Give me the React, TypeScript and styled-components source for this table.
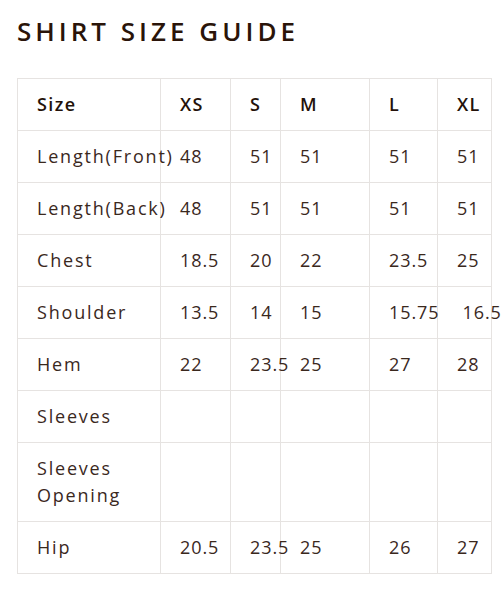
import React from 'react'
import styled, { createGlobalStyle } from 'styled-components'

const Global = createGlobalStyle`
  body {
    margin: 0;
    background: #fff;
    font-family: 'Open Sans', 'Noto Sans', sans-serif;
  }
`

const Page = styled.div`
  padding: 14px 0 0 17px;
`

const Title = styled.h2`
  margin: 0 0 30px;
  font-size: 26px;
  line-height: 34px;
  font-weight: 600;
  letter-spacing: 4px;
  color: #2a1409;
`

const Table = styled.table`
  border-collapse: collapse;
  table-layout: fixed;
  width: 474px;
  color: #3a281d;
`

const Cell = styled.td<{ $head?: boolean; $label?: boolean }>`
  border: 1px solid #e6e3e1;
  padding: 12px 0 12px 19px;
  font-size: 18px;
  line-height: 27px;
  letter-spacing: ${p => (p.$head ? '1.4px' : p.$label ? '1.8px' : '0.9px')};
  white-space: ${p => (p.$head ? 'nowrap' : 'normal')};
  font-weight: ${p => (p.$head ? 600 : 400)};
  color: ${p => (p.$head ? '#24120a' : 'inherit')};
  vertical-align: middle;
  overflow: visible;
`

const widths = [143, 70, 50, 89, 68, 54]
const sizes = ['XS', 'S', 'M', 'L', 'XL']

// the 16.5 value carries a leading space in the source table
const rows: [string, string[]][] = [
  ['Length(Front)', ['48', '51', '51', '51', '51']],
  ['Length(Back)', ['48', '51', '51', '51', '51']],
  ['Chest', ['18.5', '20', '22', '23.5', '25']],
  ['Shoulder', ['13.5', '14', '15', '15.75', '\u00a016.5']],
  ['Hem', ['22', '23.5', '25', '27', '28']],
  ['Sleeves', ['', '', '', '', '']],
  ['Sleeves Opening', ['', '', '', '', '']],
  ['Hip', ['20.5', '23.5', '25', '26', '27']],
]

export default function App() {
  return (
    <Page>
      <Global />
      <Title>SHIRT SIZE GUIDE</Title>
      <Table>
        <colgroup>
          {widths.map((w, i) => <col key={i} style={{ width: w }} />)}
        </colgroup>
        <tbody>
          <tr>
            <Cell $head>Size</Cell>
            {sizes.map(s => <Cell $head key={s}>{s}</Cell>)}
          </tr>
          {rows.map(([label, vals]) => (
            <tr key={label}>
              <Cell $label>{label}</Cell>
              {vals.map((v, i) => <Cell key={i}>{v}</Cell>)}
            </tr>
          ))}
        </tbody>
      </Table>
    </Page>
  )
}
